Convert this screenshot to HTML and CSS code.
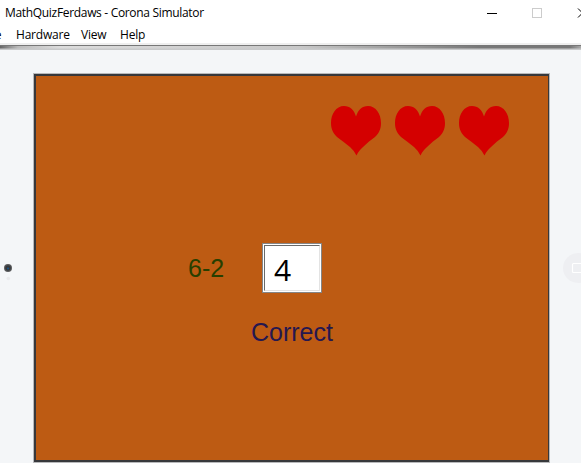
FILE: index.html
```html
<!DOCTYPE html>
<html lang="en">
<head>
<meta charset="utf-8">
<title>MathQuizFerdaws - Corona Simulator</title>
<link rel="stylesheet" href="styles.css">
</head>
<body>
<header class="titlebar">
  <span class="title">MathQuizFerdaws - Corona Simulator</span>
  <svg class="controls" width="101" height="26" viewBox="0 0 101 26" shape-rendering="crispEdges">
    <path d="M7 13.500h10" stroke="#000"/>
    <path d="M52.500 8.500h9v9h-9z" fill="none" stroke="#ccc"/>
    <path d="M98 8.500l9 9M107 8.500l-9 9" stroke="#000" shape-rendering="auto"/>
  </svg>
</header>
<nav class="menu">
  <span class="file">File</span>
  <span class="hardware">Hardware</span>
  <span class="view">View</span>
  <span class="help">Help</span>
</nav>
<main class="device">
  <div class="bezel-top"></div>
  <div class="bezel">
    <svg class="camera" width="14" height="26" viewBox="0 0 14 26">
      <circle cx="8" cy="8" r="4" fill="#5a5b5d"/>
      <circle cx="8" cy="8" r="2.800" fill="#36393c"/>
      <circle cx="8" cy="8.500" r="1" fill="#17568c"/>
      <circle cx="8.300" cy="18.500" r="1.800" fill="#e9eaec"/>
    </svg>
    <section class="screen">
      <div class="lives">
        <svg class="heart" viewBox="0 0 50 50"><path d="M25 10.500C27 4 31 0 37 0C45 0 50 8 50 17C50 23 48 27 44 31L38 35.500L32 41Q27 45.500 25.500 49.500Q23.500 45 19 41L12 35.500L6 31C2 27 0 23 0 17C0 8 5 0 13 0C19 0 23 4 25 10.500Z"/></svg>
        <svg class="heart" viewBox="0 0 50 50"><path d="M25 10.500C27 4 31 0 37 0C45 0 50 8 50 17C50 23 48 27 44 31L38 35.500L32 41Q27 45.500 25.500 49.500Q23.500 45 19 41L12 35.500L6 31C2 27 0 23 0 17C0 8 5 0 13 0C19 0 23 4 25 10.500Z"/></svg>
        <svg class="heart" viewBox="0 0 50 50"><path d="M25 10.500C27 4 31 0 37 0C45 0 50 8 50 17C50 23 48 27 44 31L38 35.500L32 41Q27 45.500 25.500 49.500Q23.500 45 19 41L12 35.500L6 31C2 27 0 23 0 17C0 8 5 0 13 0C19 0 23 4 25 10.500Z"/></svg>
      </div>
      <div class="question">
        <span class="sum">6-2</span>
        <div class="answer"><div class="field">4</div></div>
      </div>
      <p class="result">Correct</p>
    </section>
    <svg class="home" width="18" height="32" viewBox="0 0 18 32">
      <circle cx="15" cy="16" r="15" fill="#eeeff2"/>
      <rect x="9.500" y="11.500" width="12" height="9" rx="1" fill="none" stroke="#fff" stroke-width="1.200"/>
    </svg>
  </div>
</main>
</body>
</html>
```

FILE: styles.css
```css
* { box-sizing: border-box; }
body {
  margin: 0;
  width: 581px;
  height: 463px;
  overflow: hidden;
  background: #fff;
  color: #000;
  font-family: "Open Sans", sans-serif;
  font-size: 12px;
}
.titlebar {
  display: flex;
  justify-content: space-between;
  height: 26px;
  padding-left: 5px;
  line-height: 26px;
  white-space: nowrap;
}
.title { letter-spacing: -0.32px; }
.menu {
  display: flex;
  height: 17px;
  margin-left: -17px;
  line-height: 18px;
  letter-spacing: -0.2px;
}
.file { width: 33px; }
.hardware { width: 65px; }
.view { width: 39px; }
.device { height: 420px; background: #f4f6f8; }
.bezel-top {
  height: 7px;
  border-top: 2px solid #efefef;
  background:
    linear-gradient(#777 0 1px, transparent 1px),
    linear-gradient(transparent 3px, #c8c9ca 4px 5px),
    linear-gradient(90deg, #666, #bbb 18px, #dcdcdc 60px, #c8c8c8 300px, #777 480px, #777 570px, #aaa);
}
.bezel { display: flex; height: 413px; padding-top: 24px; }
.camera { flex: none; margin-top: 186px; }
.screen {
  flex: none;
  width: 515px;
  height: 388px;
  margin-left: 20px;
  border: 2px solid #37383b;
  border-right-width: 1px;
  background: #bd5b13;
  box-shadow: 0 0 0 1px #b8b9bb;
}
.home { flex: none; margin: 178px 0 0 14px; }
.lives { display: flex; gap: 14px; margin: 30px 0 0 295px; }
.heart { display: block; width: 50px; height: 50px; fill: #d40000; }
.question { display: flex; height: 50px; margin-top: 87px; }
.sum {
  width: 73px;
  margin-left: 152px;
  color: #283f00;
  font: 25px/50px "Liberation Sans", Arial, sans-serif;
}
.answer {
  width: 60px;
  height: 50px;
  margin-left: 1px;
  padding: 1px;
  border: 1px solid #858585;
  background: #fff;
}
.field {
  height: 46px;
  padding-left: 9px;
  border: 1px solid #696969;
  border-right-color: #e3e3e3;
  border-bottom-color: #e3e3e3;
  font: 30px/48px "Open Sans", sans-serif;
}
.result {
  margin: 24px 0 0 215px;
  color: #251750;
  font: 25px/30px "Liberation Sans", Arial, sans-serif;
}
```
